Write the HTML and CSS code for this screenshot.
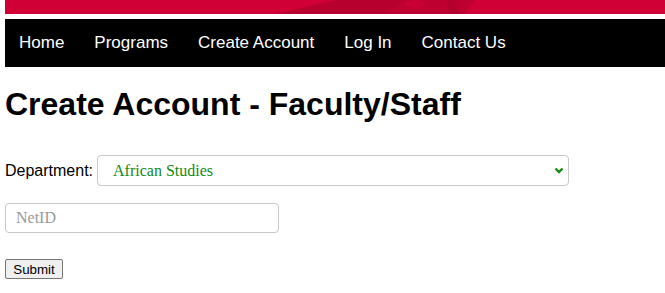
FILE: index.html
```html
<!DOCTYPE html>
<html lang="en">
<head>
<meta charset="utf-8">
<title>Create Account - Faculty/Staff</title>
<link rel="stylesheet" href="styles.css">
</head>
<body>
<div class="page">
  <header class="banner">
    <svg class="banner-art" width="660" height="14" viewBox="0 0 660 14" preserveAspectRatio="none" aria-hidden="true">
      <polygon points="270,14 330,0 400,0 430,14" fill="#b8002f"/>
      <polygon points="380,14 400,0 470,0 460,14" fill="#bd0030"/>
      <ellipse cx="410" cy="4" rx="10" ry="4" fill="#c90034"/>
      <polygon points="440,0 450,0 455,14 445,14" fill="#b3002d"/>
    </svg>
  </header>
  <nav class="nav">
    <a class="nav-link" href="#">Home</a>
    <a class="nav-link" href="#">Programs</a>
    <a class="nav-link" href="#">Create Account</a>
    <a class="nav-link" href="#">Log In</a>
    <a class="nav-link" href="#">Contact Us</a>
  </nav>
  <h1 class="title">Create Account - Faculty/Staff</h1>
  <form class="form">
    <div class="row dept-row">
      <label class="label" for="dept">Department:</label>
      <span class="select-wrap">
        <select id="dept" class="select">
          <option>African Studies</option>
        </select>
        <svg class="chevron" width="10" height="7" viewBox="0 0 10 7" aria-hidden="true">
          <polyline points="1.5,1.5 5,5 8.5,1.5" fill="none" stroke="#138a13" stroke-width="2.4"/>
        </svg>
      </span>
    </div>
    <div class="row">
      <input class="text-input" type="text" placeholder="NetID">
    </div>
    <div class="row submit-row">
      <button class="submit" type="submit">Submit</button>
    </div>
  </form>
</div>
</body>
</html>
```

FILE: styles.css
```css
html, body {
  margin: 0;
  padding: 0;
  background: #ffffff;
}

.page {
  padding-left: 5px;
  font-family: "Liberation Sans", Arial, sans-serif;
  color: #000;
}

.banner {
  height: 14px;
  background: #d00036;
  overflow: hidden;
}

.banner-art {
  display: block;
}

.nav {
  margin-top: 5px;
  height: 48px;
  background: #000;
  display: flex;
  align-items: center;
  padding-left: 14px;
  gap: 30px;
}

.nav-link {
  color: #fff;
  text-decoration: none;
  font-size: 17px;
}

.title {
  margin: 19px 0 0;
  font-size: 32px;
  font-weight: bold;
  line-height: 37px;
}

.form {
  margin-top: 32px;
}

.row {
  display: flex;
  align-items: center;
}

.dept-row {
  height: 31px;
}

.label {
  font-size: 16px;
  margin-right: 4px;
}

.select-wrap {
  position: relative;
  display: inline-block;
}

.select {
  appearance: none;
  -webkit-appearance: none;
  width: 472px;
  height: 31px;
  border: 1px solid #c8c8c8;
  border-radius: 4px;
  background: #fff;
  padding: 0 0 0 15px;
  font-family: "Liberation Serif", "Times New Roman", serif;
  font-size: 16px;
  color: #118a11;
  display: block;
}

.chevron {
  position: absolute;
  right: 5px;
  top: 12px;
}

.text-input {
  margin-top: 17px;
  width: 274px;
  height: 30px;
  box-sizing: border-box;
  border: 1px solid #c8c8c8;
  border-radius: 4px;
  padding: 0 10px;
  font-family: "Liberation Serif", "Times New Roman", serif;
  font-size: 16px;
  color: #333;
}

.text-input::placeholder {
  color: #9a9a9a;
}

.submit-row {
  margin-top: 26px;
}

.submit {
  font-family: "Liberation Sans", Arial, sans-serif;
  font-size: 13.33px;
  width: 58px;
  height: 20px;
  padding: 0;
  border: 1px solid #767676;
  border-radius: 2px;
  background: #efefef;
  color: #000;
}
```
